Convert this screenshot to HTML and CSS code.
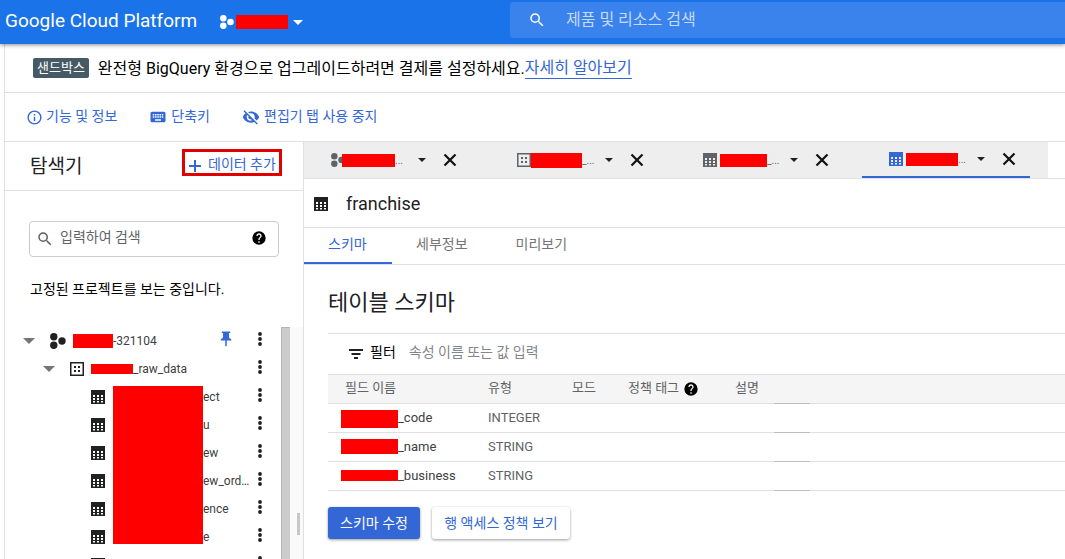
FILE: index.html
```html
<!DOCTYPE html>
<html>
<head>
  <meta charset="UTF-8">
  <meta name="viewport" content="width=device-width, initial-scale=1.0">
  <title>BigQuery</title>
  <link rel="stylesheet" href="styles.css">
</head>
<body>
  <svg class="defs" width="0" height="0">
    <symbol id="i-table" viewBox="0 0 14 14"><path fill-rule="evenodd" d="M0 0h14v14H0zM2 5v2h2V5zM6 5v2h2V5zM10 5v2h2V5zM2 8v2h2V8zM6 8v2h2V8zM10 8v2h2V8zM2 11v1.500h2V11zM6 11v1.500h2V11zM10 11v1.500h2V11z"/></symbol>
    <symbol id="i-dataset" viewBox="0 0 14 14"><path fill-rule="evenodd" d="M0 0h14v14H0zM1.500 1.500v11h11v-11zM4 4h2v2H4zM8 4h2v2H8zM4 8h2v2H4zM8 8h2v2H8z"/></symbol>
    <symbol id="i-project" viewBox="0 0 16 16"><circle cx="3.800" cy="3.700" r="3.700"/><circle cx="3.800" cy="12.300" r="3.700"/><circle cx="12" cy="8" r="3.700"/></symbol>
    <symbol id="i-search" viewBox="0 0 24 24"><path d="M15.500 14h-.79l-.28-.27A6.470 6.470 0 0 0 16 9.500 6.500 6.500 0 1 0 9.500 16c1.610 0 3.090-.59 4.230-1.570l.27.28v.79l5 4.990L20.490 19l-4.990-5zm-6 0C7.010 14 5 11.990 5 9.500S7.010 5 9.500 5 14 7.010 14 9.500 11.990 14 9.500 14z"/></symbol>
    <symbol id="i-help" viewBox="0 0 24 24"><path d="M12 2a10 10 0 1 0 0 20 10 10 0 0 0 0-20zm1 17h-2v-2h2v2zm2.070-7.750l-.9.920C13.450 12.900 13 13.500 13 15h-2v-.5c0-1.100.45-2.100 1.170-2.830l1.240-1.260c.37-.36.590-.86.590-1.410 0-1.100-.9-2-2-2s-2 .9-2 2H8c0-2.210 1.790-4 4-4s4 1.790 4 4c0 .88-.36 1.680-.93 2.250z"/></symbol>
    <symbol id="i-close" viewBox="0 0 14 14"><path d="M1.500 1.500l11 11M12.500 1.500l-11 11" fill="none" stroke="#111" stroke-width="2.200"/></symbol>
    <symbol id="i-more" viewBox="0 0 6 14"><circle cx="3" cy="2" r="1.900"/><circle cx="3" cy="7" r="1.900"/><circle cx="3" cy="12" r="1.900"/></symbol>
  </svg>

  <header class="topbar">
    <span class="brand">Google Cloud Platform</span>
    <div class="project-pick">
      <svg class="icon-project-sm"><use href="#i-project"/></svg>
      <span class="redact redact-top"></span>
      <span class="caret caret-white"></span>
    </div>
    <div class="global-search">
      <svg class="global-search-icon"><use href="#i-search"/></svg>
      <span class="global-search-text">제품 및 리소스 검색</span>
    </div>
  </header>

  <div class="page">
    <div class="sandbox">
      <span class="sandbox-chip">샌드박스</span>
      <span class="sandbox-msg">완전형 BigQuery 환경으로 업그레이드하려면 결제를 설정하세요.</span><a class="sandbox-link">자세히 알아보기</a>
    </div>

    <div class="actions">
      <a class="action action-info">
        <svg viewBox="0 0 24 24"><path d="M11 7h2v2h-2zm0 4h2v6h-2zm1-9a10 10 0 1 0 0 20 10 10 0 0 0 0-20zm0 18a8 8 0 1 1 0-16 8 8 0 0 1 0 16z"/></svg>
        <span>기능 및 정보</span>
      </a>
      <a class="action action-keys">
        <svg viewBox="0 0 24 24"><path d="M20 5H4a2 2 0 0 0-2 2v10c0 1.100.9 2 2 2h16a2 2 0 0 0 2-2V7a2 2 0 0 0-2-2zm-9 3h2v2h-2zm0 3h2v2h-2zM8 8h2v2H8zm0 3h2v2H8zm-1 2H5v-2h2zm0-3H5V8h2zm9 7H8v-2h8zm0-4h-2v-2h2zm0-3h-2V8h2zm3 3h-2v-2h2zm0-3h-2V8h2z"/></svg>
        <span>단축키</span>
      </a>
      <a class="action action-hide">
        <svg viewBox="0 0 24 24"><path d="M12 7c2.760 0 5 2.240 5 5 0 .65-.13 1.260-.36 1.830l2.920 2.920c1.510-1.260 2.700-2.890 3.430-4.750C21.260 7.610 17 4.500 12 4.500c-1.400 0-2.740.25-3.980.7l2.160 2.160C10.740 7.130 11.350 7 12 7zM2 4.270l2.280 2.280.46.46A11.800 11.800 0 0 0 1 12c1.730 4.390 6 7.500 11 7.500 1.550 0 3.030-.3 4.380-.84l.42.42L19.730 22 21 20.730 3.270 3 2 4.270zM7.530 9.800l1.550 1.550c-.05.21-.8.430-.8.650 0 1.660 1.340 3 3 3 .22 0 .44-.03.650-.08l1.550 1.550c-.67.33-1.410.53-2.200.53-2.760 0-5-2.240-5-5 0-.79.200-1.530.530-2.200z"/></svg>
        <span>편집기 탭 사용 중지</span>
      </a>
    </div>

    <div class="workspace">
      <aside class="explorer">
        <div class="explorer-head">
          <h2>탐색기</h2>
          <a class="add-data">
            <svg class="add-plus" viewBox="0 0 12 12"><path d="M5 0h2v5h5v2H7v5H5V7H0V5h5z"/></svg>
            <span>데이터 추가</span>
          </a>
        </div>
        <div class="explorer-search">
          <svg class="explorer-search-icon"><use href="#i-search"/></svg>
          <span class="explorer-search-text">입력하여 검색</span>
          <svg class="help"><use href="#i-help"/></svg>
        </div>
        <p class="pinned-note">고정된 프로젝트를 보는 중입니다.</p>

        <div class="tree-wrap">
          <div class="tree">
            <div class="tree-row level-0">
              <span class="caret caret-grey"></span>
              <svg class="icon-project"><use href="#i-project"/></svg>
              <span class="redact redact-project"></span>
              <span class="tree-name">-321104</span>
              <svg class="pin" viewBox="0 0 24 24"><path d="M16 9V4h1c.55 0 1-.45 1-1s-.45-1-1-1H7c-.55 0-1 .45-1 1s.45 1 1 1h1v5c0 1.660-1.340 3-3 3v2h5.970v7l1 1 1-1v-7H19v-2c-1.660 0-3-1.340-3-3z"/></svg>
              <svg class="more"><use href="#i-more"/></svg>
            </div>
            <div class="tree-row level-1">
              <span class="caret caret-grey"></span>
              <svg class="icon-dataset"><use href="#i-dataset"/></svg>
              <span class="redact redact-dataset"></span>
              <span class="tree-name">_raw_data</span>
              <svg class="more"><use href="#i-more"/></svg>
            </div>
            <div class="tree-row level-2"><svg class="icon-table"><use href="#i-table"/></svg><span class="tree-name">ect</span><svg class="more"><use href="#i-more"/></svg></div>
            <div class="tree-row level-2"><svg class="icon-table"><use href="#i-table"/></svg><span class="tree-name">u</span><svg class="more"><use href="#i-more"/></svg></div>
            <div class="tree-row level-2"><svg class="icon-table"><use href="#i-table"/></svg><span class="tree-name">ew</span><svg class="more"><use href="#i-more"/></svg></div>
            <div class="tree-row level-2"><svg class="icon-table"><use href="#i-table"/></svg><span class="tree-name">ew_ord…</span><svg class="more"><use href="#i-more"/></svg></div>
            <div class="tree-row level-2"><svg class="icon-table"><use href="#i-table"/></svg><span class="tree-name">ence</span><svg class="more"><use href="#i-more"/></svg></div>
            <div class="tree-row level-2"><svg class="icon-table"><use href="#i-table"/></svg><span class="tree-name">e</span><svg class="more"><use href="#i-more"/></svg></div>
            <div class="tree-row level-2"><svg class="icon-table"><use href="#i-table"/></svg><svg class="more"><use href="#i-more"/></svg></div>
            <span class="redact redact-tables"></span>
          </div>
          <div class="scrollbar"></div>
          <div class="scrollbar-outer"><div class="scrollbar-grip"></div></div>
        </div>
      </aside>

      <main class="detail">
        <div class="tabs">
          <div class="tab">
            <svg class="tab-icon tab-project"><use href="#i-project"/></svg>
            <span class="redact redact-tab1"></span><span class="tab-rest">...</span>
            <span class="caret caret-dark"></span>
            <svg class="tab-close"><use href="#i-close"/></svg>
          </div>
          <div class="tab">
            <svg class="tab-icon tab-dataset"><use href="#i-dataset"/></svg>
            <span class="redact redact-tab2"></span><span class="tab-rest">_...</span>
            <span class="caret caret-dark"></span>
            <svg class="tab-close"><use href="#i-close"/></svg>
          </div>
          <div class="tab">
            <svg class="tab-icon tab-dataset"><use href="#i-table"/></svg>
            <span class="redact redact-tab3"></span><span class="tab-rest">_...</span>
            <span class="caret caret-dark"></span>
            <svg class="tab-close"><use href="#i-close"/></svg>
          </div>
          <div class="tab tab-active">
            <svg class="tab-icon tab-icon-active"><use href="#i-table"/></svg>
            <span class="redact redact-tab4"></span><span class="tab-rest">...</span>
            <span class="caret caret-dark"></span>
            <svg class="tab-close"><use href="#i-close"/></svg>
          </div>
        </div>

        <div class="title-row">
          <svg class="title-icon"><use href="#i-table"/></svg>
          <span>franchise</span>
        </div>

        <div class="subtabs">
          <a class="subtab subtab-active">스키마</a>
          <a class="subtab subtab-details">세부정보</a>
          <a class="subtab subtab-preview">미리보기</a>
        </div>

        <section class="schema">
          <h3>테이블 스키마</h3>
          <div class="filter">
            <svg class="filter-icon" viewBox="0 0 14 10"><path d="M0 0h14v2H0zM2.500 4h9v2h-9zM5 8h4v2H5z"/></svg>
            <span class="filter-label">필터</span>
            <span class="filter-hint">속성 이름 또는 값 입력</span>
          </div>
          <div class="grid-row grid-head">
            <span class="cell-name">필드 이름</span>
            <span class="cell-type">유형</span>
            <span class="cell-mode">모드</span>
            <span class="cell-tag"><span>정책 태그</span> <svg class="help help-head"><use href="#i-help"/></svg></span>
            <span class="cell-desc">설명</span>
          </div>
          <div class="grid-row">
            <span class="cell-name field"><span class="redact redact-f1"></span>_code</span>
            <span class="cell-type">INTEGER</span>
          </div>
          <div class="grid-row">
            <span class="cell-name field"><span class="redact redact-f2"></span>_name</span>
            <span class="cell-type">STRING</span>
          </div>
          <div class="grid-row">
            <span class="cell-name field"><span class="redact redact-f3"></span>_business</span>
            <span class="cell-type">STRING</span>
          </div>
          <div class="buttons">
            <button class="btn btn-primary">스키마 수정</button>
            <button class="btn btn-plain">행 액세스 정책 보기</button>
          </div>
        </section>
      </main>
    </div>
  </div>
</body>
</html>
```

FILE: styles.css
```css
html, body {
  margin: 0;
  height: 100%;
  overflow: hidden;
}
body {
  font-family: Roboto, "Noto Sans CJK KR", sans-serif;
  font-size: 14px;
  color: #202124;
  background: #fff;
  display: flex;
  flex-direction: column;
}
.defs {
  position: absolute;
}
a {
  color: #3367d6;
  text-decoration: none;
}
.redact {
  display: inline-block;
  background: #f00;
  flex: none;
}

/* top bar */
.topbar {
  height: 44px;
  flex: none;
  background: #1a73e8;
  color: #fff;
  display: flex;
  align-items: flex-start;
  box-shadow: 0 1px 4px rgba(0, 0, 0, 0.45);
  position: relative;
  z-index: 2;
}
.brand {
  font-size: 19px;
  line-height: 41px;
  margin-left: 5px;
  width: 215px;
  white-space: nowrap;
}
.project-pick {
  display: flex;
  align-items: center;
  height: 44px;
  width: 290px;
}
.icon-project-sm {
  width: 14px;
  height: 14px;
  fill: #fff;
  margin-right: 2px;
}
.redact-top {
  width: 52px;
  height: 14px;
}
.caret {
  display: inline-block;
  width: 0;
  height: 0;
  border-style: solid;
  border-color: #000 transparent transparent;
  flex: none;
}
.caret-white {
  border-width: 5px 5px 0;
  border-top-color: #fff;
  margin: 0 0 0 5px;
}
.global-search {
  flex: 1;
  height: 36px;
  margin-top: 2px;
  background: #3b83ec;
  border-radius: 4px 0 0 4px;
  display: flex;
  align-items: center;
  color: #c6dafa;
  font-size: 16px;
}
.global-search-icon {
  width: 18px;
  height: 18px;
  fill: #fff;
  margin: 0 20px 0 18px;
}
.global-search-text {
  padding-bottom: 5px;
}

/* page body */
.page {
  flex: 1;
  margin-left: 4px;
  border-left: 1px solid #e0e0e0;
  display: flex;
  flex-direction: column;
  min-height: 0;
}
.sandbox {
  height: 48px;
  flex: none;
  border-bottom: 1px solid #e0e0e0;
  display: flex;
  align-items: center;
  padding-left: 28px;
  font-size: 16px;
  color: #000;
}
.sandbox-chip {
  background: #455a64;
  color: #fff;
  font-size: 13px;
  border-radius: 2px;
  padding: 0 4px;
  line-height: 20px;
  margin-right: 9px;
}
.sandbox-msg {
  padding-bottom: 2px;
}
.sandbox-link {
  border-bottom: 1px solid #3367d6;
  line-height: 20px;
}
.actions {
  height: 48px;
  flex: none;
  border-bottom: 1px solid #e0e0e0;
  display: flex;
  align-items: center;
}
.action {
  display: flex;
  align-items: center;
  gap: 4px;
}
.action span {
  margin-bottom: 5px;
}
.action svg {
  width: 18px;
  height: 18px;
  fill: #3367d6;
}
.action-info {
  margin-left: 21px;
  gap: 3px;
}
.action-info svg {
  width: 17px;
  height: 17px;
}
.action-keys {
  margin-left: 32px;
}
.action-hide {
  margin-left: 32px;
}
.workspace {
  flex: 1;
  display: flex;
  min-height: 0;
}

/* explorer */
.explorer {
  width: 298px;
  flex: none;
  border-right: 1px solid #e0e0e0;
}
.explorer-head {
  height: 48px;
  border-bottom: 1px solid #e0e0e0;
  display: flex;
  align-items: center;
}
.explorer-head h2 {
  margin: 0 0 4px 25px;
  font-size: 19px;
  font-weight: 400;
  width: 152px;
}
.add-data {
  width: 100px;
  height: 27px;
  box-sizing: border-box;
  border: 3px solid #e00000;
  display: flex;
  align-items: center;
  white-space: nowrap;
  margin-top: -7px;
}
.add-plus {
  width: 12px;
  height: 12px;
  fill: #3367d6;
  margin: 7px 7px 0 4px;
}
.explorer-search {
  margin: 30px 0 0 24px;
  width: 250px;
  height: 36px;
  box-sizing: border-box;
  border: 1px solid #ccc;
  border-radius: 4px;
  display: flex;
  align-items: center;
  color: #5f6368;
}
.explorer-search-icon {
  width: 18px;
  height: 18px;
  fill: #616161;
  margin-left: 6px;
}
.explorer-search-text {
  flex: 1;
  margin-left: 6px;
  padding-bottom: 6px;
}
.help {
  width: 16px;
  height: 16px;
  margin: 0 11px 2px 0;
}
.pinned-note {
  margin: 23px 0 0 25px;
  color: #000;
  line-height: 18px;
}
.tree-wrap {
  margin-top: 29px;
  display: flex;
}
.tree {
  width: 276px;
  position: relative;
  flex: none;
}
.tree-row {
  height: 28px;
  display: flex;
  align-items: center;
  font-size: 12px;
  color: #3c4043;
  position: relative;
}
.more {
  position: absolute;
  left: 252px;
  top: 5px;
  width: 6px;
  height: 14px;
  fill: #212121;
}
.caret-grey {
  border-width: 6px 6px 0;
  border-top-color: #757575;
}
.level-0 {
  padding-left: 18px;
}
.level-1 {
  padding-left: 38px;
}
.level-2 {
  padding-left: 86px;
}
.icon-project {
  width: 16px;
  height: 16px;
  fill: #212121;
  margin-left: 15px;
}
.icon-dataset {
  width: 14px;
  height: 14px;
  fill: #212121;
  margin-left: 15px;
}
.icon-table {
  width: 14px;
  height: 14px;
  fill: #212121;
  margin-right: 98px;
}
.redact-project {
  width: 40px;
  height: 14px;
  margin-left: 7px;
}
.redact-dataset {
  width: 42px;
  height: 10px;
  margin-left: 7px;
}
.tree-name {
  font-size: 12px;
}
.pin {
  position: absolute;
  left: 212px;
  top: 3px;
  width: 18px;
  height: 18px;
  fill: #3367d6;
}
.redact-tables {
  position: absolute;
  left: 108px;
  top: 59px;
  width: 90px;
  height: 158px;
}
.scrollbar {
  width: 9px;
  height: 232px;
  box-sizing: border-box;
  background: #ccc;
  border-top: 1px solid #b5b5b5;
  border-left: 1px solid #b5b5b5;
  flex: none;
}
.scrollbar-outer {
  width: 13px;
  height: 232px;
  background: #fafafa;
  overflow: hidden;
}
.scrollbar-grip {
  width: 3px;
  height: 22px;
  background: #c8c8c8;
  margin: 186px 0 0 7px;
}

/* detail pane */
.detail {
  flex: 1;
  min-width: 0;
}
.tabs {
  height: 36px;
  border-bottom: 1px solid #e0e0e0;
  display: flex;
}
.tab {
  width: 186px;
  height: 36px;
  box-sizing: border-box;
  background: #eee;
  display: flex;
  align-items: center;
  padding-left: 27px;
  font-size: 10px;
  color: #5f6368;
}
.tab-active {
  border-bottom: 2px solid #3367d6;
  width: 168px;
  margin-right: 18px;
  box-shadow: 18px 0 0 #eee;
}
.tab-icon {
  width: 14px;
  height: 14px;
  flex: none;
}
.tab-project {
  fill: #5f6368;
  margin-right: -3px;
}
.tab-dataset {
  fill: #5f6368;
}
.tab-icon-active {
  fill: #3367d6;
  margin-right: 3px;
}
.redact-tab1 {
  width: 53px;
  height: 13px;
}
.redact-tab2 {
  width: 51px;
  height: 15px;
}
.redact-tab3 {
  width: 47px;
  height: 13px;
  margin-left: 3px;
}
.redact-tab4 {
  width: 52px;
  height: 13px;
}
.tab-rest {
  width: 11px;
  white-space: nowrap;
  margin-right: 12px;
}
.tab-active .tab-rest {
  margin-right: 8px;
}
.caret-dark {
  border-width: 4px 4px 0;
  border-top-color: #202124;
  margin-top: -1px;
}
.tab-close {
  width: 14px;
  height: 14px;
  margin-left: 17px;
  flex: none;
}
.title-row {
  height: 48px;
  border-bottom: 1px solid #e0e0e0;
  display: flex;
  align-items: center;
  font-size: 18px;
  color: #202124;
}
.title-icon {
  width: 14px;
  height: 14px;
  fill: #212121;
  margin: 2px 18px 0 10px;
}
.subtabs {
  height: 36px;
  border-bottom: 1px solid #e0e0e0;
  display: flex;
}
.subtab {
  color: #757575;
  line-height: 32px;
  height: 36px;
  box-sizing: border-box;
}
.subtab-active {
  color: #3367d6;
  width: 88px;
  padding-left: 24px;
  border-bottom: 2px solid #3367d6;
}
.subtab-details {
  margin-left: 24px;
}
.subtab-preview {
  margin-left: 48px;
}
.schema {
  padding-left: 24px;
}
.schema h3 {
  margin: 0;
  font-size: 22px;
  font-weight: 400;
  line-height: 28px;
  padding-top: 24px;
  height: 44px;
  color: #202124;
}
.filter {
  height: 40px;
  border-top: 1px solid #e0e0e0;
  border-bottom: 1px solid #e0e0e0;
  display: flex;
  align-items: center;
  padding-left: 21px;
}
.filter-icon {
  width: 14px;
  height: 10px;
  fill: #212121;
  margin-right: 7px;
}
.filter-label {
  color: #000;
  margin: 0 13px 6px 0;
}
.filter-hint {
  color: #80868b;
  margin-bottom: 6px;
}
.grid-row {
  height: 27px;
  padding-bottom: 1px;
  border-bottom: 1px solid #e0e0e0;
  display: flex;
  align-items: center;
  position: relative;
  font-size: 13px;
  color: #5f6368;
}
.grid-row::after {
  content: "";
  position: absolute;
  left: 446px;
  bottom: -1px;
  width: 36px;
  height: 1px;
  background: #bdbdbd;
}
.grid-head {
  background: #f5f5f5;
}
.grid-head > span:not(.cell-tag), .cell-tag > span {
  margin-bottom: 4px;
}
.cell-name {
  width: 160px;
  padding-left: 17px;
  box-sizing: border-box;
  flex: none;
}
.field {
  padding-left: 13px;
  color: #3c4043;
  display: flex;
  align-items: center;
}
.cell-type {
  width: 84px;
  flex: none;
}
.cell-mode {
  width: 56px;
  flex: none;
}
.cell-tag {
  width: 107px;
  flex: none;
  display: flex;
  align-items: center;
  gap: 4px;
}
.help-head {
  width: 16px;
  height: 16px;
  margin: 0;
}
.redact-f1 {
  width: 57px;
  height: 18px;
  margin-top: 3px;
}
.redact-f2 {
  width: 57px;
  height: 15px;
}
.redact-f3 {
  width: 57px;
  height: 11px;
}
.buttons {
  display: flex;
  gap: 12px;
  margin-top: 16px;
}
.btn {
  height: 32px;
  border: 0;
  border-radius: 3px;
  font: inherit;
  padding: 0 0 3px;
  box-shadow: 0 1px 3px rgba(0, 0, 0, 0.4);
}
.btn-primary {
  width: 92px;
  background: #3367d6;
  color: #fff;
}
.btn-plain {
  width: 138px;
  background: #fff;
  color: #3367d6;
}
```
